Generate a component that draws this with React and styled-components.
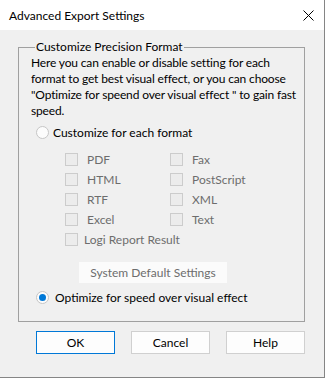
import React from 'react';
import styled, { createGlobalStyle } from 'styled-components';

const GlobalStyle = createGlobalStyle`
  body {
    margin: 0;
    font-family: Lato, "Noto Sans", sans-serif;
    font-size: 12px;
    color: #000;
  }
`;

const Window = styled.div`
  width: 324px;
  height: 377px;
  background: #f0f0f0;
  border-right: 1px solid #858585;
  border-bottom: 1px solid #858585;
  display: flex;
  flex-direction: column;
`;

const TitleBar = styled.div`
  height: 30px;
  background: #fff;
  display: flex;
  align-items: center;
  justify-content: space-between;
  padding: 0 10px 0 9px;
`;

const Body = styled.div`
  padding: 9px 19px 0 18px;
  display: flex;
  flex-direction: column;
`;

const Group = styled.fieldset`
  margin: 0;
  padding: 0 0 8px 12px;
  border: 1px solid #a0a0a0;
  height: 283px;
  box-sizing: border-box;
  display: flex;
  flex-direction: column;
`;

const Legend = styled.legend`
  padding: 0 1px;
  margin-left: 4px;
  line-height: 16px;
`;

const Description = styled.p`
  margin: 0;
  line-height: 16px;
  width: 272px;
  letter-spacing: -0.15px;
`;

const RadioRow = styled.label`
  display: flex;
  align-items: center;
  gap: ${p => p.gap}px;
  margin: ${p => p.m};
  padding-left: 5px;
  height: 16px;
`;

const Radio = styled.span`
  width: 11px;
  height: 11px;
  border-radius: 50%;
  border: 1px solid #c6c6c6;
  background: #fcfcfc;
  display: flex;
  align-items: center;
  justify-content: center;
  &::after {
    content: '';
    width: 7px;
    height: 7px;
    border-radius: 50%;
    background: ${p => (p.checked ? '#0078d7' : 'transparent')};
  }
`;

const CheckGrid = styled.div`
  display: grid;
  grid-template-columns: 105px 105px;
  grid-auto-rows: 20px;
  margin: 9px 0 0 34px;
`;

const CheckItem = styled.div`
  display: flex;
  align-items: center;
  gap: ${p => p.gap}px;
  color: #6d6d6d;
  grid-column: ${p => (p.wide ? '1 / span 2' : 'auto')};
`;

const Box = styled.span`
  width: 11px;
  height: 11px;
  border: 1px solid #cccccc;
  background: #ececec;
`;

const DefaultButton = styled.div`
  align-self: flex-start;
  margin: 13px 0 0 48px;
  width: 148px;
  height: 21px;
  background: #fbfbfb;
  color: #6d6d6d;
  display: flex;
  align-items: center;
  justify-content: center;
`;

const ButtonBar = styled.div`
  display: flex;
  gap: 16px;
  margin: 9px 0 0 18px;
`;

const Button = styled.button`
  width: 80px;
  height: 23px;
  box-sizing: border-box;
  font: inherit;
  color: #000;
  background: #fdfdfd;
  border: 1px solid ${p => (p.focused ? '#0078d7' : '#d0d0d0')};
  border-radius: 0;
  padding: 0;
`;

const formats = [
  'PDF', 'Fax', 'HTML', 'PostScript', 'RTF', 'XML', 'Excel', 'Text',
];

export default function App() {
  return (
    <>
      <GlobalStyle />
      <Window>
        <TitleBar>
          <span>Advanced Export Settings</span>
          <svg width="11" height="11" viewBox="0 0 11 11">
            <path d="M0.5 0.5 L10.5 10.5 M10.5 0.5 L0.5 10.5" stroke="#000" strokeWidth="1" />
          </svg>
        </TitleBar>
        <Body>
          <Group>
            <Legend>Customize Precision Format</Legend>
            <Description>
              Here you can enable or disable setting for each format to get best visual effect, or you can choose "Optimize for speend over visual effect " to gain fast speed.
            </Description>
            <RadioRow gap={4} m="5px 0 0 0">
              <Radio />
              Customize for each format
            </RadioRow>
            <CheckGrid>
              {formats.map(f => (
                <CheckItem key={f} gap={9}>
                  <Box />
                  {f}
                </CheckItem>
              ))}
              <CheckItem wide gap={6}>
                <Box />
                Logi Report Result
              </CheckItem>
            </CheckGrid>
            <DefaultButton>System Default Settings</DefaultButton>
            <RadioRow gap={6} m="6px 0 0 0">
              <Radio checked />
              Optimize for speed over visual effect
            </RadioRow>
          </Group>
          <ButtonBar>
            <Button focused>OK</Button>
            <Button>Cancel</Button>
            <Button>Help</Button>
          </ButtonBar>
        </Body>
      </Window>
    </>
  );
}
